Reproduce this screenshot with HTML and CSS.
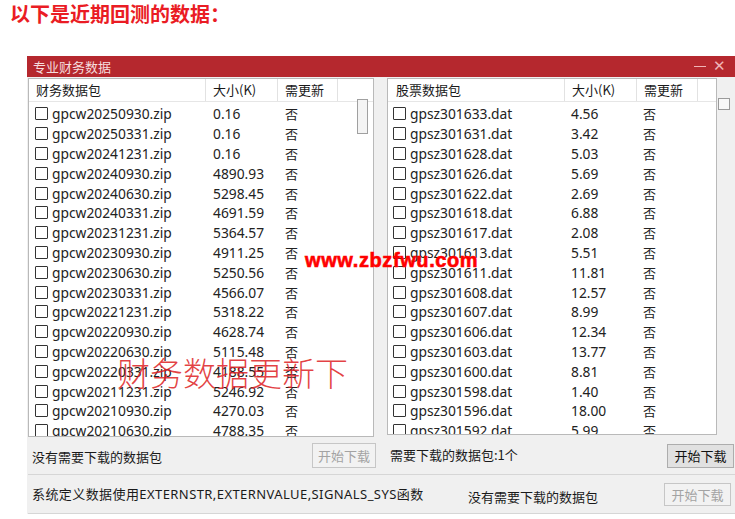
FILE: index.html
```html
<!DOCTYPE html>
<html lang="zh-CN">
<head>
<meta charset="utf-8">
<title>专业财务数据</title>
<link rel="stylesheet" href="styles.css">
</head>
<body>
<div class="page">
  <h1 class="heading">以下是近期回测的数据：</h1>
  <div class="window">
    <div class="titlebar">
      <span class="title">专业财务数据</span>
      <span class="ctrls"><span class="min"></span><span class="close">✕</span></span>
    </div>
    <div class="wbody">
      <div class="lists">
        <div class="listbox left">
          <div class="lhead">
            <div class="hc">财务数据包</div><div class="hc">大小(K)</div><div class="hc">需更新</div><div class="hc last"></div>
          </div>
          <div class="lrows">
            <div class="row"><span class="name"><i class="cb"></i>gpcw20250930.zip</span><span class="size">0.16</span><span class="upd">否</span></div>
            <div class="row"><span class="name"><i class="cb"></i>gpcw20250331.zip</span><span class="size">0.16</span><span class="upd">否</span></div>
            <div class="row"><span class="name"><i class="cb"></i>gpcw20241231.zip</span><span class="size">0.16</span><span class="upd">否</span></div>
            <div class="row"><span class="name"><i class="cb"></i>gpcw20240930.zip</span><span class="size">4890.93</span><span class="upd">否</span></div>
            <div class="row"><span class="name"><i class="cb"></i>gpcw20240630.zip</span><span class="size">5298.45</span><span class="upd">否</span></div>
            <div class="row"><span class="name"><i class="cb"></i>gpcw20240331.zip</span><span class="size">4691.59</span><span class="upd">否</span></div>
            <div class="row"><span class="name"><i class="cb"></i>gpcw20231231.zip</span><span class="size">5364.57</span><span class="upd">否</span></div>
            <div class="row"><span class="name"><i class="cb"></i>gpcw20230930.zip</span><span class="size">4911.25</span><span class="upd">否</span></div>
            <div class="row"><span class="name"><i class="cb"></i>gpcw20230630.zip</span><span class="size">5250.56</span><span class="upd">否</span></div>
            <div class="row"><span class="name"><i class="cb"></i>gpcw20230331.zip</span><span class="size">4566.07</span><span class="upd">否</span></div>
            <div class="row"><span class="name"><i class="cb"></i>gpcw20221231.zip</span><span class="size">5318.22</span><span class="upd">否</span></div>
            <div class="row"><span class="name"><i class="cb"></i>gpcw20220930.zip</span><span class="size">4628.74</span><span class="upd">否</span></div>
            <div class="row"><span class="name"><i class="cb"></i>gpcw20220630.zip</span><span class="size">5115.48</span><span class="upd">否</span></div>
            <div class="row"><span class="name"><i class="cb"></i>gpcw20220331.zip</span><span class="size">4188.55</span><span class="upd">否</span></div>
            <div class="row"><span class="name"><i class="cb"></i>gpcw20211231.zip</span><span class="size">5246.92</span><span class="upd">否</span></div>
            <div class="row"><span class="name"><i class="cb"></i>gpcw20210930.zip</span><span class="size">4270.03</span><span class="upd">否</span></div>
            <div class="row"><span class="name"><i class="cb"></i>gpcw20210630.zip</span><span class="size">4788.35</span><span class="upd">否</span></div>
          </div>
          <div class="thumb"></div>
        </div>
        <div class="listbox right">
          <div class="lhead">
            <div class="hc">股票数据包</div><div class="hc">大小(K)</div><div class="hc">需更新</div><div class="hc last"></div>
          </div>
          <div class="lrows">
            <div class="row"><span class="name"><i class="cb"></i>gpsz301633.dat</span><span class="size">4.56</span><span class="upd">否</span></div>
            <div class="row"><span class="name"><i class="cb"></i>gpsz301631.dat</span><span class="size">3.42</span><span class="upd">否</span></div>
            <div class="row"><span class="name"><i class="cb"></i>gpsz301628.dat</span><span class="size">5.03</span><span class="upd">否</span></div>
            <div class="row"><span class="name"><i class="cb"></i>gpsz301626.dat</span><span class="size">5.69</span><span class="upd">否</span></div>
            <div class="row"><span class="name"><i class="cb"></i>gpsz301622.dat</span><span class="size">2.69</span><span class="upd">否</span></div>
            <div class="row"><span class="name"><i class="cb"></i>gpsz301618.dat</span><span class="size">6.88</span><span class="upd">否</span></div>
            <div class="row"><span class="name"><i class="cb"></i>gpsz301617.dat</span><span class="size">2.08</span><span class="upd">否</span></div>
            <div class="row"><span class="name"><i class="cb"></i>gpsz301613.dat</span><span class="size">5.51</span><span class="upd">否</span></div>
            <div class="row"><span class="name"><i class="cb"></i>gpsz301611.dat</span><span class="size">11.81</span><span class="upd">否</span></div>
            <div class="row"><span class="name"><i class="cb"></i>gpsz301608.dat</span><span class="size">12.57</span><span class="upd">否</span></div>
            <div class="row"><span class="name"><i class="cb"></i>gpsz301607.dat</span><span class="size">8.99</span><span class="upd">否</span></div>
            <div class="row"><span class="name"><i class="cb"></i>gpsz301606.dat</span><span class="size">12.34</span><span class="upd">否</span></div>
            <div class="row"><span class="name"><i class="cb"></i>gpsz301603.dat</span><span class="size">13.77</span><span class="upd">否</span></div>
            <div class="row"><span class="name"><i class="cb"></i>gpsz301600.dat</span><span class="size">8.81</span><span class="upd">否</span></div>
            <div class="row"><span class="name"><i class="cb"></i>gpsz301598.dat</span><span class="size">1.40</span><span class="upd">否</span></div>
            <div class="row"><span class="name"><i class="cb"></i>gpsz301596.dat</span><span class="size">18.00</span><span class="upd">否</span></div>
            <div class="row"><span class="name"><i class="cb"></i>gpsz301592.dat</span><span class="size">5.99</span><span class="upd">否</span></div>
          </div>
        </div>
        <div class="sidebox"></div>
      </div>
      <div class="foot1">
        <div class="f1left">
          <span class="msg">没有需要下载的数据包</span>
          <button class="btn disabled b1">开始下载</button>
        </div>
        <div class="f1right">
          <span class="msg">需要下载的数据包:1个</span>
          <button class="btn b2">开始下载</button>
        </div>
      </div>
      <div class="foot2">
        <span class="msg sys">系统定义数据使用EXTERNSTR,EXTERNVALUE,SIGNALS_SYS函数</span>
        <span class="msg none">没有需要下载的数据包</span>
        <button class="btn disabled b3">开始下载</button>
      </div>
    </div>
  </div>
  <div class="wm-url">www.zbzfwu.com</div>
  <div class="wm-cn">财务数据更新下</div>
</div>
</body>
</html>
```

FILE: styles.css
```css
html, body {
  margin: 0;
  padding: 0;
  background: #ffffff;
  overflow: hidden;
}
.page {
  position: relative;
  width: 735px;
  height: 519px;
  overflow: hidden;
  font-family: "Noto Sans CJK SC", "Noto Sans", sans-serif;
}
.heading {
  margin: 0;
  padding: 4px 0 0 10px;
  height: 20px;
  line-height: 20px;
  font-size: 20px;
  font-weight: 700;
  color: #ea1c24;
}
.window {
  margin: 32px 0 0 27px;
  width: 720px;
}
.titlebar {
  height: 21px;
  background: #b5282e;
  display: flex;
  align-items: center;
  justify-content: space-between;
  padding: 0 0 0 6px;
}
.title {
  color: #f6dede;
  font-size: 13px;
  line-height: 21px;
}
.ctrls {
  display: flex;
  align-items: center;
  gap: 7px;
  width: 51px;
  padding-right: 2px;
}
.min {
  display: block;
  width: 12px;
  height: 1px;
  background: #f0b4b6;
}
.close {
  color: #f0b4b6;
  font-size: 15px;
  line-height: 15px;
  font-family: "DejaVu Sans", sans-serif;
  font-weight: 300;
}
.wbody {
  background: #f0f0f0;
  padding: 1px 0 0 1px;
}
.lists {
  display: flex;
  align-items: flex-start;
}
.listbox {
  position: relative;
  background: #ffffff;
  border: 1px solid #b9b9b9;
  height: 357px;
  overflow: hidden;
  box-sizing: content-box;
}
.listbox.left {
  width: 344px;
}
.listbox.right {
  width: 328px;
  margin-left: 13px;
  height: 355px;
}
.lhead {
  display: flex;
  height: 22px;
  border-bottom: 1px solid #e6e6e6;
}
.hc {
  font-size: 13px;
  line-height: 22px;
  color: #1a1a1a;
  border-right: 1px solid #e2e2e2;
  padding-left: 7px;
  box-sizing: border-box;
}
.left .hc:nth-child(1) { width: 177px; }
.left .hc:nth-child(2) { width: 72px; }
.left .hc:nth-child(3) { width: 60px; }
.right .hc:nth-child(1) { width: 177px; padding-left: 8px; }
.right .hc:nth-child(2) { width: 72px; }
.right .hc:nth-child(3) { width: 61px; }
.hc.last { flex: 1; border-right: none; }
.lrows {
  padding-top: 2px;
}
.row {
  display: flex;
  height: 19.8px;
  align-items: center;
  font-family: "Noto Sans", "Noto Sans CJK SC", sans-serif;
  font-size: 13.8px;
  color: #222222;
  white-space: nowrap;
}
.name {
  display: flex;
  align-items: center;
  width: 184px;
  padding-left: 6px;
  box-sizing: border-box;
}
.right .name { width: 183px; padding-left: 5px; }
.cb {
  display: inline-block;
  width: 11px;
  height: 11px;
  border: 1px solid #333333;
  border-radius: 1px;
  margin-right: 4px;
  flex: none;
}
.size {
  width: 72px;
}
.upd {
  font-family: "Noto Sans CJK SC", sans-serif;
  font-size: 13px;
}
.thumb {
  position: absolute;
  left: 328px;
  top: 20px;
  width: 9px;
  height: 33px;
  border: 1px solid #a0a0a0;
  background: #f4f4f4;
}
.sidebox {
  width: 10px;
  height: 10px;
  border: 1px solid #9a9a9a;
  background: #f8f8f8;
  margin: 20px 0 0 1px;
}
.msg {
  font-size: 13px;
  color: #1a1a1a;
  white-space: nowrap;
}
.btn {
  font-family: "Noto Sans CJK SC", sans-serif;
  font-size: 13px;
  padding: 0;
  margin: 0;
  background: #e1e1e1;
  border: 1px solid #adadad;
  color: #111111;
  height: 25px;
  width: 64px;
  line-height: 22px;
}
.btn.disabled {
  background: #f2f2f2;
  border-color: #c6c6c6;
  color: #a3a3a3;
}
.foot1 {
  display: flex;
  align-items: center;
  height: 37px;
  border-bottom: 1px solid #d6d6d6;
}
.f1left {
  width: 348px;
  display: flex;
  align-items: center;
  justify-content: space-between;
  padding-left: 4px;
  box-sizing: border-box;
}
.f1left .msg { margin-top: 2px; }
.f1right {
  display: flex;
  align-items: center;
  margin-left: 13px;
  width: 345px;
  justify-content: space-between;
}
.f1right .msg { margin-left: 1px; margin-top: -2px; }
.b2 { height: 24px; width: 67px; }
.foot2 {
  display: flex;
  align-items: center;
  height: 38px;
  border-bottom: 1px solid #d6d6d6;
}
.foot2 .sys {
  width: 436px;
  padding-left: 4px;
  font-family: "Noto Sans", "Noto Sans CJK SC", sans-serif;
  font-size: 13px;
  margin-top: -2px;
  letter-spacing: 0.42px;
}
.foot2 .none {
  width: 196px;
  margin-top: 4px;
}
.b3 { height: 23px; width: 67px; }
.wm-url {
  position: absolute;
  left: 305px;
  top: 248px;
  font-family: "Liberation Sans", Arial, sans-serif;
  font-weight: 700;
  font-size: 20px;
  letter-spacing: 0.6px;
  color: #ff0000;
  line-height: 24px;
  -webkit-text-stroke: 0.6px #ff0000;
}
.wm-cn {
  position: absolute;
  left: 117px;
  top: 350px;
  font-family: "Noto Sans CJK SC", sans-serif;
  font-weight: 300;
  font-size: 33px;
  line-height: 44px;
  color: rgba(222, 30, 36, 0.85);
}
```
